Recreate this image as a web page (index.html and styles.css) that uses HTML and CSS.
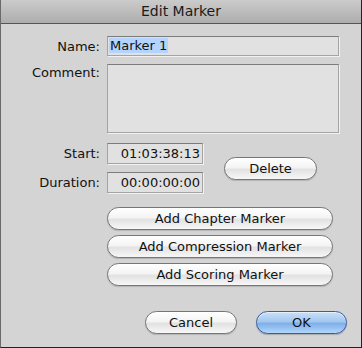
FILE: index.html
```html
<!DOCTYPE html>
<html lang="en">
<head>
    <meta charset="UTF-8">
    <title>Edit Marker</title>
    <link rel="stylesheet" href="styles.css">
</head>
<body>
    <div class="dialog">
        <header class="titlebar">Edit Marker</header>
        <main class="content">
            <div class="row name-row">
                <label class="label">Name:</label>
                <div class="field name-field"><span class="selected">Marker 1</span></div>
            </div>
            <div class="row comment-row">
                <label class="label">Comment:</label>
                <div class="field comment-field"></div>
            </div>
            <div class="times">
                <div class="time-fields">
                    <div class="row">
                        <label class="label">Start:</label>
                        <div class="field time-field">01:03:38:13</div>
                    </div>
                    <div class="row">
                        <label class="label">Duration:</label>
                        <div class="field time-field">00:00:00:00</div>
                    </div>
                </div>
                <button class="btn delete">Delete</button>
            </div>
            <div class="add-buttons">
                <button class="btn wide">Add Chapter Marker</button>
                <button class="btn wide">Add Compression Marker</button>
                <button class="btn wide">Add Scoring Marker</button>
            </div>
            <div class="footer">
                <button class="btn cancel">Cancel</button>
                <button class="btn ok">OK</button>
            </div>
        </main>
    </div>
</body>
</html>
```

FILE: styles.css
```css
*{
    margin: 0;
    padding: 0;
    box-sizing: border-box;
    font-family: "DejaVu Sans", "Liberation Sans", sans-serif;
}

body{
    background-color: #d4d4d4;
}

.dialog{
    width: 362px;
    height: 348px;
    background-color: #d4d4d4;
    border-left: 1px solid #6a6a6a;
    border-right: 1px solid #222;
    border-bottom: 1px solid #222;
    display: flex;
    flex-direction: column;
}

.titlebar{
    height: 24px;
    background-image: linear-gradient(#cbcbcb, #adadad);
    border-bottom: 1px solid #555;
    text-align: center;
    font-size: 14px;
    line-height: 23px;
    color: #1a1a1a;
}

.content{
    display: flex;
    flex-direction: column;
    padding-top: 12px;
}

.row{
    display: flex;
    align-items: center;
}
.label{
    width: 99px;
    margin-right: 7px;
    text-align: right;
    font-size: 13px;
    color: #111;
}

.field{
    background-color: #e1e1e1;
    border: 1px solid #a4a4a4;
    border-top-color: #7c7c7c;
    box-shadow: 1px 1px 0 #f2f2f2;
    font-size: 13px;
    color: #111;
}

.name-field{
    width: 232px;
    height: 20px;
    padding: 1px 0 0 1px;
    line-height: 16px;
}
.selected{
    background-color: #b5d4fd;
    padding: 0 1px;
}

.comment-row{
    margin-top: 8px;
    align-items: flex-start;
}
.comment-row .label{
    padding-top: 1px;
}
.comment-field{
    width: 232px;
    height: 69px;
}

.times{
    display: flex;
    align-items: center;
    margin-top: 10px;
}
.time-fields{
    display: flex;
    flex-direction: column;
    gap: 8px;
}
.time-field{
    width: 96px;
    height: 21px;
    text-align: right;
    padding-right: 2px;
    line-height: 19px;
}

.btn{
    height: 23px;
    border: 1px solid #767676;
    border-radius: 12px;
    background-image: linear-gradient(#ffffff 0%, #f4f4f4 45%, #e2e2e2 55%, #f7f7f7 100%);
    box-shadow: inset 0 1px 0 #fff, 0 1px 1px rgba(0, 0, 0, .15);
    font-size: 13px;
    color: #111;
    cursor: pointer;
    outline: 0;
}

.delete{
    width: 93px;
    margin-left: 21px;
}

.add-buttons{
    display: flex;
    flex-direction: column;
    gap: 5px;
    margin: 14px 0 0 106px;
}
.wide{
    width: 226px;
}

.footer{
    display: flex;
    justify-content: flex-end;
    gap: 19px;
    margin-top: 25px;
    padding-right: 14px;
}
.cancel{
    width: 92px;
}
.ok{
    width: 91px;
    border-color: #3e5c9a;
    background-image: linear-gradient(#c9e0f8 0%, #a4c8f0 45%, #7fb0ea 55%, #b2d6fa 100%);
    box-shadow: inset 0 1px 0 #e4f0fc, 0 1px 1px rgba(0, 0, 0, .2);
}
```
